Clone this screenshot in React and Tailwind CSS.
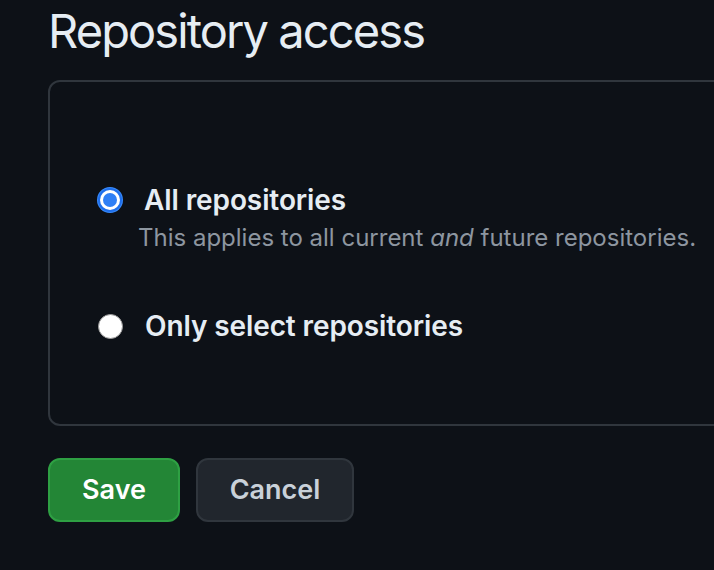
import React, { useState } from 'react';

const options = [
  {
    id: 'all',
    label: 'All repositories',
    note: (
      <>
        This applies to all current <em>and</em> future repositories.
      </>
    ),
  },
  { id: 'select', label: 'Only select repositories' },
];

const Radio = ({ checked }) =>
  checked ? (
    <span className="block w-[24px] h-[24px] rounded-full bg-[#1f6feb] flex items-center justify-center shrink-0 shadow-[0_0_0_1px_#388bfd]">
      <span className="w-[20px] h-[20px] rounded-full bg-white flex items-center justify-center">
        <span className="w-[14px] h-[14px] rounded-full bg-[#2f7ff5]" />
      </span>
    </span>
  ) : (
    <span className="block w-[25px] h-[25px] rounded-full bg-white border border-[#9a9a9a] shrink-0" />
  );

export default function App() {
  const [choice, setChoice] = useState('all');

  return (
    <div className="min-h-screen w-[714px] h-[570px] overflow-hidden bg-[#0d1117] font-['Inter',sans-serif]">
      <div className="pl-[48px] pt-[2px]">
        <h2 className="text-[47px] leading-[58px] text-[#e6edf3] font-normal tracking-[-1.9px]">
          Repository access
        </h2>

        <div className="mt-[20px] w-[700px] h-[346px] border-2 border-[#30363d] rounded-[12px] pl-[48px] pt-[101px]">
          {options.map((opt, i) => (
            <label
              key={opt.id}
              className={`flex items-start gap-[22px] cursor-pointer ${i > 0 ? 'mt-[55px]' : ''}`}
              onClick={() => setChoice(opt.id)}
            >
              <span className="block pt-[5px]">
                <Radio checked={choice === opt.id} />
              </span>
              <span className="flex flex-col">
                <span className="text-[28px] leading-[34px] font-semibold text-[#e6edf3] tracking-[-0.1px]">
                  {opt.label}
                </span>
                {opt.note && (
                  <span className="text-[24px] leading-[32px] text-[#8d96a0] -ml-[6px] mt-[5px]">
                    {opt.note}
                  </span>
                )}
              </span>
            </label>
          ))}
        </div>

        <div className="mt-[32px] flex gap-[16px]">
          <button className="w-[132px] h-[64px] rounded-[12px] bg-[#238636] border-2 border-[#2ea043] text-white text-[27px] font-semibold">
            Save
          </button>
          <button className="w-[158px] h-[64px] rounded-[12px] bg-[#21262d] border-2 border-[#30363d] text-[#c9d1d9] text-[27px] font-semibold">
            Cancel
          </button>
        </div>
      </div>
    </div>
  );
}
